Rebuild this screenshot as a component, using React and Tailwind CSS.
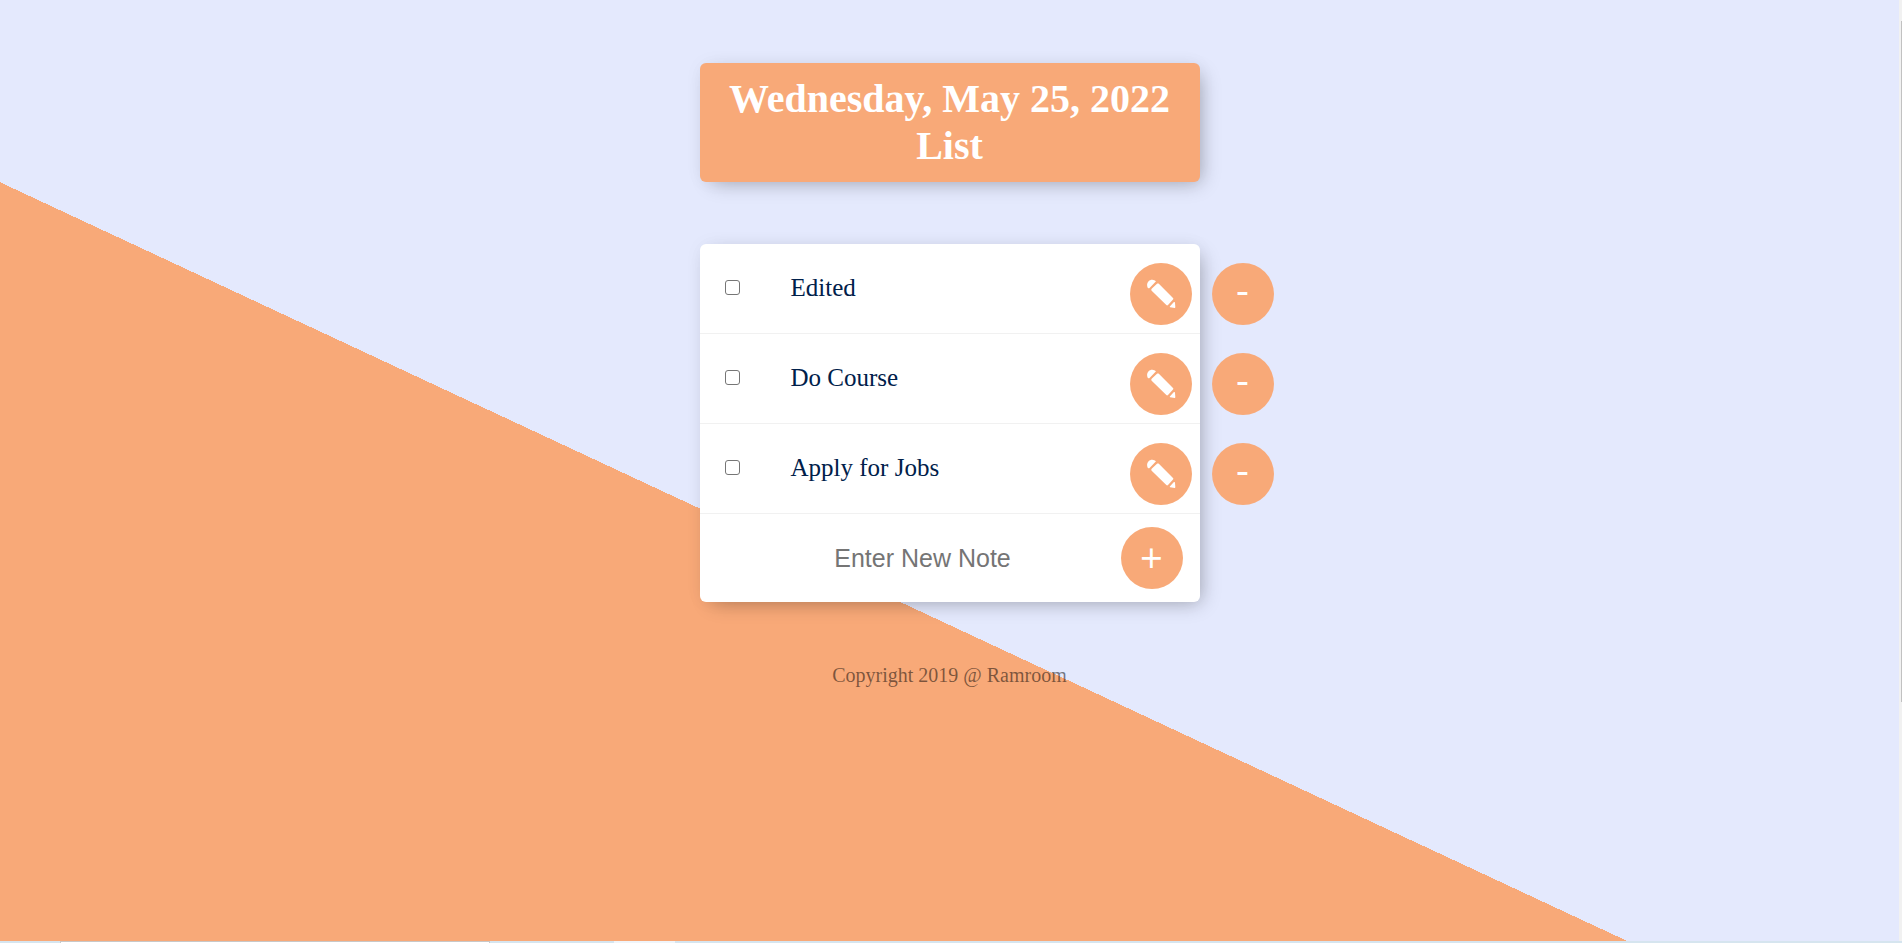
const items = ["Edited", "Do Course", "Apply for Jobs"];

function Pencil() {
  return (
    <svg viewBox="0 0 90 90" className="size-[30px] fill-white" aria-hidden="true">
      <path d="M5 26C-1 12 10 1 19 2c5 .5 8 2 11 5L10 28c-2 0-4-1-5-2z" />
      <path d="M33 14.500c1.500-1.500 4-1.500 5.500 0L81 57c1.500 1.500 1.500 3 0 4.500L66 78c-1.500 1.500-3.500 1.500-5 0L17 35c-1.500-1.500-1.500-4 0-5.500z" />
      <path d="M83 70c2-2 4-1 4 1l1 14c0 1.500-1 2-2 2l-13-2c-2 0-2-2-1-3z" />
    </svg>
  );
}

const round =
  "flex size-[62px] shrink-0 items-center justify-center rounded-full bg-[#f8a978] text-white";
const symbol = "font-['Open_Sans',sans-serif] text-[40px]";
const card = "w-full rounded-[6px] shadow-[6px_6px_19px_-6px_rgba(0,0,0,0.3),0_0_19px_0_rgba(0,0,0,0.04)]";

export default function App() {
  return (
    <div className="flex h-screen flex-col overflow-hidden font-['Liberation_Serif',serif]">
      <div className="flex min-h-0 flex-1">
        <main className="flex flex-1 flex-col items-center overflow-hidden bg-[#e4e9fd] bg-[linear-gradient(25deg,#f8a978_50%,#e4e9fd_50%)] bg-[length:100%_1250px] bg-no-repeat pt-[63px]">
          <div className="flex w-[500px] flex-col items-center">
            <h1 className={`${card} bg-[#f8a978] px-3 pt-3 pb-[13px] text-center text-[40px] leading-[47px] font-bold text-white`}>
              Wednesday, May 25, 2022 List
            </h1>
            <div className={`${card} mt-[62px] bg-white`}>
              <ul>
                {items.map((item, i) => (
                  <li key={item} className="flex h-[90px] items-start border-b border-[#f1f1f1]">
                    <input
                      id={`item-${i}`}
                      type="checkbox"
                      className="mt-9 ml-[25px] size-[15px] shrink-0 appearance-none rounded-[3px] border border-[#767676] bg-white checked:bg-[#f8a978]"
                    />
                    <label htmlFor={`item-${i}`} className="mt-7 ml-[51px] w-[339px] shrink-0 text-[25px] leading-[32px] text-[#00204a]">
                      {item}
                    </label>
                    <button aria-label={`Edit ${item}`} className={`${round} mt-[19px]`}>
                      <Pencil />
                    </button>
                    <button aria-label={`Delete ${item}`} className={`${round} ${symbol} mt-[19px] ml-5 pb-[10px]`}>
                      -
                    </button>
                  </li>
                ))}
              </ul>
              <form className="flex h-[88px] items-center pr-[17px] pl-[25px]" onSubmit={(e) => e.preventDefault()}>
                <input
                  type="text"
                  aria-label="New note"
                  placeholder="Enter New Note"
                  className="h-[75px] min-w-0 flex-1 bg-transparent text-center font-['Liberation_Sans',sans-serif] text-[25px] text-[#00204a] outline-none placeholder:text-[#757575]"
                />
                <button aria-label="Add note" className={`${round} ${symbol}`}>
                  +
                </button>
              </form>
            </div>
            <footer className="mt-[61px] text-[20px] leading-[24px] text-black/50">Copyright 2019 @ Ramroom</footer>
          </div>
        </main>
        <div className="flex w-[3px] shrink-0 justify-end bg-[#f1f1f1] pt-[21px]">
          <div className="h-[74%] w-px bg-[#c1c1c1]" />
        </div>
      </div>
      <div className="flex h-[2px] shrink-0 bg-[#d6e5ef]">
        <div className="ml-[60px] w-[430px] border border-b-0 border-[#c8c8c8] bg-white" />
        <div className="ml-[124px] w-[61px] bg-[#f0f5fa]" />
      </div>
    </div>
  );
}
